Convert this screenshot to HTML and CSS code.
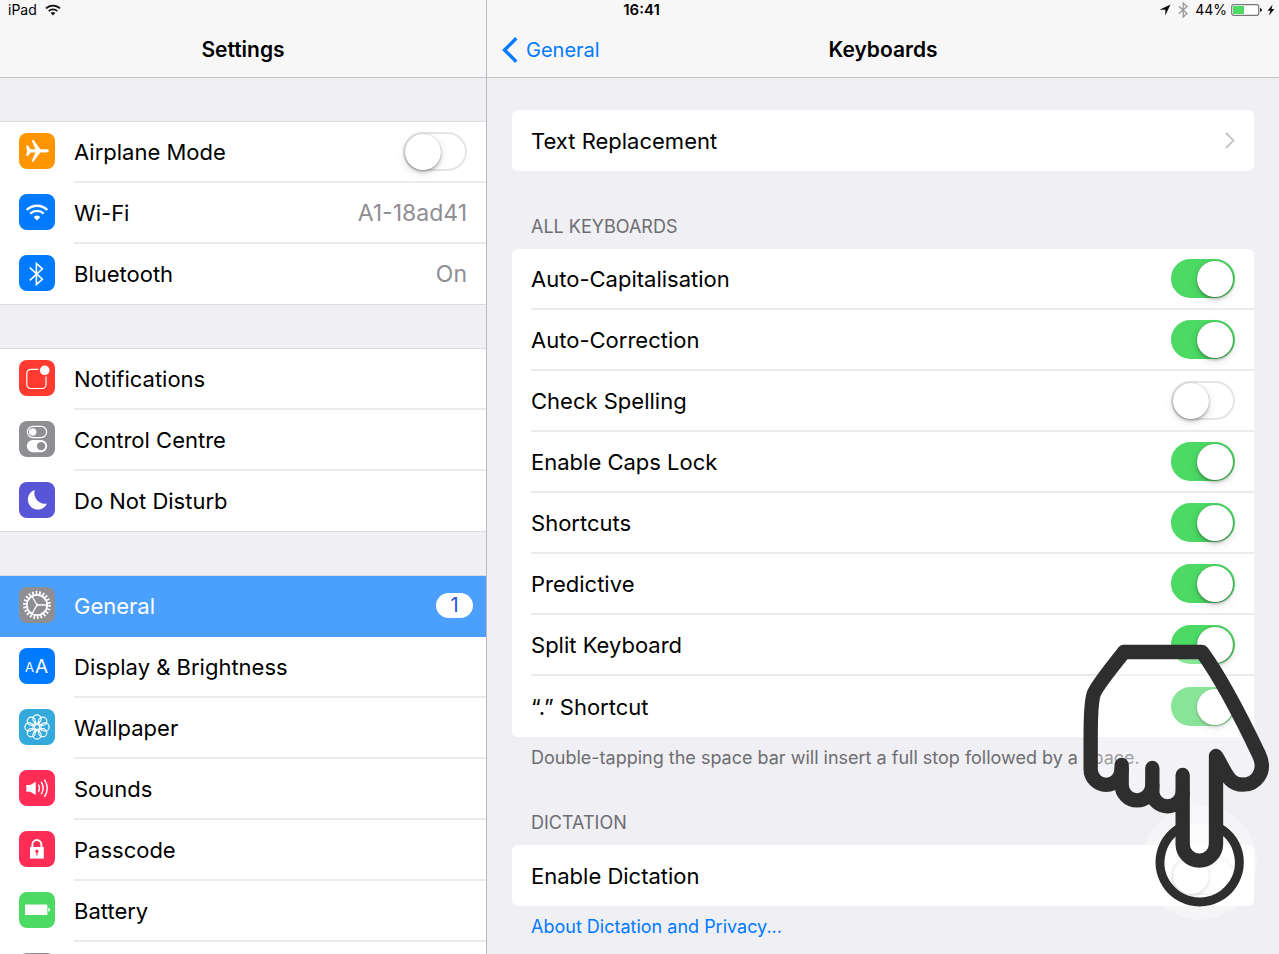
FILE: index.html
```html
<!DOCTYPE html>
<html lang="en">
<head>
	<meta charset="UTF-8">
	<meta name="viewport" content="width=device-width, initial-scale=1">
	<title>Keyboards</title>
	<link rel="stylesheet" href="styles.css">
</head>
<body>

<div class="status">
	<div class="status-left">
		<span>iPad</span>
		<svg width="16" height="12" viewBox="0 0 16 12"><g fill="none" stroke="#111" stroke-width="1.8"><path d="M1 4.4A10 10 0 0 1 15 4.4"/><path d="M3.7 7.1A6.2 6.2 0 0 1 12.3 7.1"/></g><path d="M5.7 9A3.4 3.4 0 0 1 10.3 9L8 11.4z" fill="#111"/></svg>
	</div>
	<div class="status-time">16:41</div>
	<div class="status-right">
		<svg width="12" height="12" viewBox="0 0 12 12"><path d="M11.5 .5L6.3 11.5V5.8H.5z" fill="#111"/></svg>
		<svg class="status-bt" width="10" height="16" viewBox="0 0 10 16"><path d="M.8 4.2L9 11.5 5.2 15V1L9 4.5.8 11.8" fill="none" stroke="#999" stroke-width="1.3"/></svg>
		<span>44%</span>
		<svg width="32" height="12" viewBox="0 0 32 12"><rect x=".7" y=".7" width="27" height="10.6" rx="2" fill="#fff" stroke="#777" stroke-width="1.2"/><path d="M2 2h11v8H2z" fill="#4cd964"/><path d="M29 4q2 .4 2 2t-2 2z" fill="#222"/></svg>
		<svg width="8" height="12" viewBox="0 0 8 12"><path d="M5.5 .5L.5 6.800h2.800L2 11.500 7.500 5H4.600z" fill="#111"/></svg>
	</div>
</div>

<div class="split">
	<aside class="sidebar">
		<header class="bar"><h1 class="title">Settings</h1></header>
		<nav class="menu">
			<div class="group">
				<label class="item">
					<span class="icon orange"><svg viewBox="0 0 36 36"><path d="M7.2 12.6H9L11.6 16.2H16.4L12.6 7.3Q12.6 6.8 14.6 7L21.3 16.2H27.5Q30 16.6 30 17.8T27.5 19.4H21.3L14.6 28.6Q12.6 28.8 12.6 28.3L16.4 19.4H11.6L9 23H7.2L8 17.8z" fill="#fff"/></svg></span>
					<span class="line"><span class="name">Airplane Mode</span><input class="switch" type="checkbox"></span>
				</label>
				<a class="item" href="#">
					<span class="icon blue"><svg viewBox="0 0 36 36"><g fill="none" stroke="#fff" stroke-width="2.4"><path d="M7.7 16A14.5 14.5 0 0 1 28.3 16"/><path d="M11.3 19.6A9.6 9.6 0 0 1 24.7 19.6"/></g><path d="M14.6 23A5 5 0 0 1 21.4 23L18 26.5z" fill="#fff"/></svg></span>
					<span class="line"><span class="name">Wi-Fi</span><span class="value">A1-18ad41</span></span>
				</a>
				<a class="item" href="#">
					<span class="icon blue"><svg viewBox="0 0 36 36"><path d="M10.8 12.6L23.4 24.2 17.4 29.5V8.5L23.4 13.8 10.8 25.4" fill="none" stroke="#fff" stroke-width="1.6"/></svg></span>
					<span class="line"><span class="name">Bluetooth</span><span class="value">On</span></span>
				</a>
			</div>

			<div class="group">
				<a class="item" href="#">
					<span class="icon red"><svg viewBox="0 0 36 36"><rect x="7.8" y="9.3" width="19.2" height="19.2" rx="4" fill="none" stroke="#fff" stroke-width="1.2"/><circle cx="25.7" cy="10.3" r="6.4" fill="#ff3b30"/><circle cx="25.7" cy="10.3" r="4.8" fill="#fff"/></svg></span>
					<span class="line"><span class="name">Notifications</span></span>
				</a>
				<a class="item" href="#">
					<span class="icon gray"><svg viewBox="0 0 36 36"><rect x="8.4" y="5.4" width="19.2" height="11.2" rx="5.6" fill="none" stroke="#fff" stroke-width="1.2"/><circle cx="13.7" cy="11" r="3.7" fill="#fff"/><rect x="7.8" y="19" width="20.4" height="12.2" rx="6.1" fill="#fff"/><circle cx="22.1" cy="25.1" r="4.2" fill="#8e8e93"/></svg></span>
					<span class="line"><span class="name">Control Centre</span></span>
				</a>
				<a class="item" href="#">
					<span class="icon purple"><svg viewBox="0 0 36 36"><path d="M15.8 8A10 10 0 1 0 28 21.5A10.6 10.6 0 0 1 15.8 8z" fill="#fff"/></svg></span>
					<span class="line"><span class="name">Do Not Disturb</span></span>
				</a>
			</div>

			<div class="group">
				<a class="item active" href="#">
					<span class="icon gray"><svg viewBox="0 0 36 36"><g fill="none" stroke="#fff"><circle cx="18" cy="18" r="12.3" stroke-width="3.4" stroke-dasharray="1.7 1.813"/><circle cx="18" cy="18" r="10.2" stroke-width="1.8"/><path d="M18 18H28M18 18L13 9.3M18 18L13 26.7" stroke-width="1.3"/></g><circle cx="18" cy="18" r="1.4" fill="#fff"/></svg></span>
					<span class="line"><span class="name">General</span><span class="badge">1</span></span>
				</a>
				<a class="item" href="#">
					<span class="icon blue"><svg viewBox="0 0 36 36"><text class="letters" x="6" y="23.5" font-size="13">A</text><text class="letters" x="16" y="24.5" font-size="19">A</text></svg></span>
					<span class="line"><span class="name">Display &amp; Brightness</span></span>
				</a>
				<a class="item" href="#">
					<span class="icon cyan"><svg viewBox="0 0 36 36"><g fill="none" stroke="#fff" stroke-width="1.2"><circle cx="26" cy="18" r="4.1"/><circle cx="23.7" cy="23.7" r="4.1"/><circle cx="18" cy="26" r="4.1"/><circle cx="12.3" cy="23.7" r="4.1"/><circle cx="10" cy="18" r="4.1"/><circle cx="12.3" cy="12.3" r="4.1"/><circle cx="18" cy="10" r="4.1"/><circle cx="23.7" cy="12.3" r="4.1"/><circle cx="18" cy="18" r="2.6"/><path d="M20.4 17L23 14.5M20.4 19L23 21.5M15.6 17L13 14.5M15.6 19L13 21.5M17 15.6L15 12.5M19 15.6L21 12.5M17 20.4L15 23.5M19 20.4L21 23.5"/></g></svg></span>
					<span class="line"><span class="name">Wallpaper</span></span>
				</a>
				<a class="item" href="#">
					<span class="icon pink"><svg viewBox="0 0 36 36"><path d="M7.3 15H11.3L16.7 11.8V25L11.3 21.8H7.3z" fill="#fff"/><g fill="none" stroke="#fff" stroke-width="1.4"><path d="M19.3 14.6Q21.6 18.2 19.3 21.8"/><path d="M22.2 12Q26.2 18.2 22.2 24.4"/><path d="M25.4 9.6Q31.2 18.2 25.4 26.8"/></g></svg></span>
					<span class="line"><span class="name">Sounds</span></span>
				</a>
				<a class="item" href="#">
					<span class="icon pink"><svg viewBox="0 0 36 36"><path d="M13.4 17V13.5A4.5 4.5 0 0 1 22.4 13.5V17" fill="none" stroke="#fff" stroke-width="1.9"/><path d="M11 16H24.8V27.6H11z" fill="#fff"/><circle cx="17.9" cy="20.2" r="1.6" fill="#ff2d55"/><path d="M17.9 20V24.6" stroke="#ff2d55" stroke-width="1.2"/></svg></span>
					<span class="line"><span class="name">Passcode</span></span>
				</a>
				<a class="item" href="#">
					<span class="icon green"><svg viewBox="0 0 36 36"><rect x="6" y="12.5" width="22.4" height="10.6" rx=".6" fill="#fff"/><path d="M29.3 15.8Q31 16 31 17.8T29.3 19.8z" fill="#fff"/></svg></span>
					<span class="line"><span class="name">Battery</span></span>
				</a>
				<a class="item" href="#">
					<span class="icon gray"></span>
					<span class="line"></span>
				</a>
			</div>
		</nav>
	</aside>

	<main class="detail">
		<header class="bar">
			<a class="back" href="#"><svg width="16" height="26" viewBox="0 0 16 26"><path d="M14.3 1.3L2.5 13 14.3 24.7" fill="none" stroke="#007aff" stroke-width="3.4"/></svg>General</a>
			<h2 class="title">Keyboards</h2>
		</header>
		<div class="content">
			<div class="card">
				<a class="row" href="#">Text Replacement<svg class="chevron" width="10" height="17" viewBox="0 0 10 17"><path d="M1 1l7.5 7.5L1 16" fill="none" stroke="#c7c7cc" stroke-width="2"/></svg></a>
			</div>

			<h3 class="heading">ALL KEYBOARDS</h3>
			<div class="card">
				<label class="row">Auto-Capitalisation<input class="switch" type="checkbox" checked></label>
				<label class="row">Auto-Correction<input class="switch" type="checkbox" checked></label>
				<label class="row">Check Spelling<input class="switch" type="checkbox"></label>
				<label class="row">Enable Caps Lock<input class="switch" type="checkbox" checked></label>
				<label class="row">Shortcuts<input class="switch" type="checkbox" checked></label>
				<label class="row">Predictive<input class="switch" type="checkbox" checked></label>
				<label class="row">Split Keyboard<input class="switch" type="checkbox" checked></label>
				<label class="row">“.” Shortcut<input class="switch" type="checkbox" checked></label>
			</div>
			<p class="note">Double-tapping the space bar will insert a full stop followed by a space.</p>

			<h3 class="heading">DICTATION</h3>
			<div class="card">
				<label class="row">Enable Dictation<input class="switch" type="checkbox"></label>
			</div>
			<p class="note"><a href="#">About Dictation and Privacy...</a></p>
		</div>
	</main>
</div>

<!-- tap pointer over the dictation switch -->
<svg class="hand" width="219" height="300" viewBox="0 0 657 900">
	<circle cx="419" cy="697" r="172" fill="#fff" fill-opacity=".4"/>
	<circle cx="419" cy="697" r="119" fill="#fff" fill-opacity=".4"/>
	<path d="M469 589A119 119 0 1 1 369 589" fill="none" stroke="#2e2e2e" stroke-width="27"/>
	<path d="M192 66H426C480 140 550 275 597 374C622 428 585 464 549 464C505 464 495 430 468 378V642A50 50 0 0 1 368 642V490A46 46 0 0 1 277 490V465A46 46 0 0 1 185 465V418A46 46 0 0 1 92 418V320C92 260 94 215 101 192C108 170 155 112 192 66z" fill="#fff" fill-opacity=".34"/>
	<g fill="none" stroke="#2e2e2e" stroke-width="43" stroke-linecap="round" stroke-linejoin="round">
		<path d="M192 66H426C480 140 550 275 597 374C622 428 585 464 549 464C505 464 500 430 468 378V642A50 50 0 0 1 368 642V435"/>
		<path d="M368 490A46 46 0 0 1 277 490V414"/>
		<path d="M277 465A46 46 0 0 1 185 465V405"/>
		<path d="M185 418A46 46 0 0 1 92 418V320C92 260 94 215 101 192C108 170 155 112 192 66"/>
	</g>
</svg>

</body>
</html>
```
FILE: styles.css
```css
*{
	box-sizing: border-box;
}
body{
	margin: 0;
	background-color: #efeff4;
	color: #000;
	font-family: Inter, "Liberation Sans", sans-serif;
	font-size: 22px;
	line-height: 28px;
}
a{
	color: inherit;
	text-decoration: none;
}
h1, h2, h3, p{
	margin: 0;
}

/* status bar */
.status{
	position: absolute;
	top: 0;
	left: 0;
	right: 0;
	z-index: 2;
	display: grid;
	grid-template-columns: 1fr auto 1fr;
	align-items: center;
	height: 20px;
	padding: 0 4px 0 8px;
	font-size: 14px;
	line-height: 20px;
}
.status-left, .status-right{
	display: flex;
	align-items: center;
	gap: 8px;
}
.status-right{
	justify-content: flex-end;
	gap: 4px;
}
.status-bt{
	margin: 0 3px;
}
.status-time{
	font-size: 15px;
	font-weight: 600;
}

.split{
	display: grid;
	grid-template-columns: 38% 1fr;
	height: 100vh;
	overflow: hidden;
}
.sidebar{
	overflow: hidden;
}
.detail{
	overflow: hidden;
	border-left: 1px solid #b9b9be;
}
.bar{
	display: grid;
	grid-template-columns: 1fr auto 1fr;
	align-items: center;
	height: 78px;
	padding: 22px 15px 0;
	background-color: #f7f7f8;
	border-bottom: 1px solid #c4c4c8;
}
.title{
	grid-column: 2;
	font-size: 21px;
	line-height: 28px;
	font-weight: 600;
}
.back{
	display: flex;
	align-items: center;
	gap: 8px;
	color: #007aff;
	font-size: 20px;
}

/* left menu */
.group{
	margin-top: 43px;
	background-color: #fff;
	border-top: 1px solid #dcdce0;
}
.item{
	display: flex;
	align-items: flex-start;
	gap: 19px;
	padding-left: 19px;
}
.line{
	flex: 1;
	display: flex;
	align-items: center;
	justify-content: space-between;
	min-height: 61px;
	padding-right: 19px;
	border-bottom: 2px solid #ebebed;
}
.group .item:last-child{
	border-bottom: 1px solid #dcdce0;
}
.group .item:last-child .line{
	min-height: 60px;
	border-bottom: 0;
}
.value{
	color: #8e8e93;
	font-size: 23px;
}
.active{
	background-color: #4b9fff;
	color: #fff;
}
.active .line{
	padding-right: 13px;
	border-color: #4b9fff;
}
.badge{
	width: 37px;
	border-radius: 13px;
	background-color: #fff;
	color: #1f55e8;
	font-size: 20px;
	line-height: 25px;
	text-align: center;
}
.icon{
	width: 36px;
	height: 36px;
	margin-top: 11px;
	border-radius: 8px;
}
.icon svg{
	display: block;
}
.letters{
	fill: #fff;
}
.orange{ background-color: #ff9500; }
.blue{ background-color: #007aff; }
.red{ background-color: #ff3b30; }
.gray{ background-color: #8e8e93; }
.purple{ background-color: #5856d6; }
.cyan{ background-color: #34aadc; }
.pink{ background-color: #ff2d55; }
.green{ background-color: #4cd964; }

/* right side */
.content{
	padding: 32px 25px 0;
}
.card{
	padding-left: 19px;
	background-color: #fff;
	border-radius: 6px;
}
.row{
	display: flex;
	align-items: center;
	justify-content: space-between;
	min-height: 61px;
	padding-right: 19px;
	border-bottom: 2px solid #ebebed;
}
.row:last-child{
	border-bottom: 0;
}
.heading{
	padding: 44px 19px 10px;
	color: #6d6d72;
	font-size: 18px;
	line-height: 24px;
	font-weight: 400;
}
.note{
	padding: 12px 19px 0;
	color: #6d6d72;
	font-size: 18px;
	line-height: 18px;
}
.note a{
	color: #007aff;
}

.switch{
	appearance: none;
	flex: none;
	display: flex;
	align-items: center;
	width: 64px;
	height: 39px;
	margin: 0;
	border: 2px solid #e5e5e5;
	border-radius: 20px;
	background-color: #fff;
}
.switch::before{
	content: "";
	width: 36px;
	height: 36px;
	border-radius: 50%;
	background-color: #fff;
	box-shadow: 0 2px 3px rgba(0,0,0,0.25), 0 3px 10px rgba(0,0,0,0.12), 0 0 1px rgba(0,0,0,0.3);
}
.switch:checked{
	justify-content: flex-end;
	border-color: #4cd964;
	background-color: #4cd964;
}

.hand{
	position: absolute;
	top: 630px;
	right: 0;
	z-index: 3;
	pointer-events: none;
}
```
